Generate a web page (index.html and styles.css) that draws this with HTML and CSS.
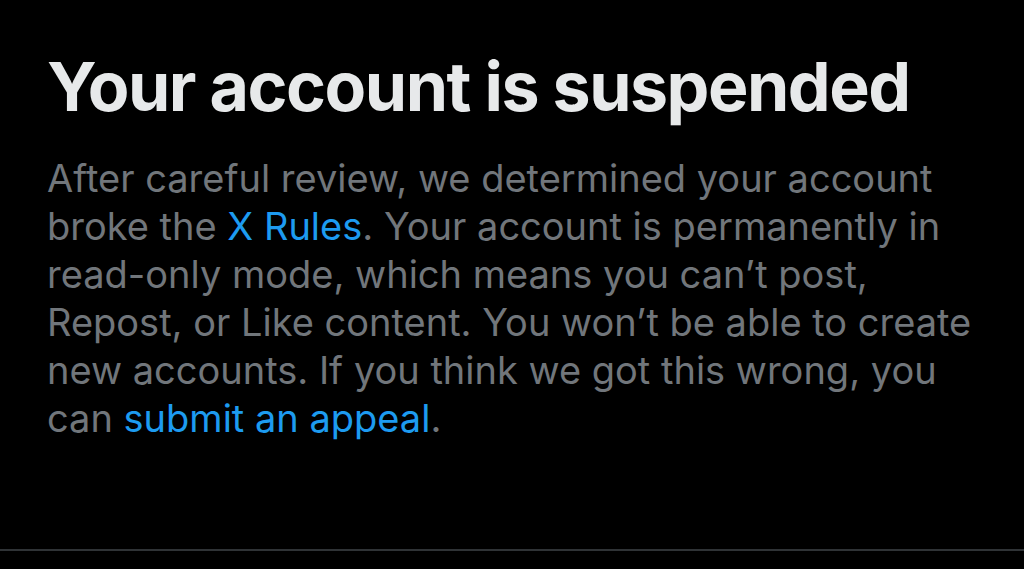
FILE: index.html
```html
<!DOCTYPE html>
<html lang="en">
<head>
<meta charset="utf-8">
<title>Your account is suspended</title>
<link rel="stylesheet" href="styles.css">
</head>
<body>
<main class="notice">
  <h1 class="notice-title">Your account is suspended</h1>
  <p class="notice-text">After careful review, we determined your account broke the <a class="link" href="#">X Rules</a>. Your account is permanently in read-only mode, which means you can’t post, Repost, or Like content. You won’t be able to create new accounts. If you think we got this wrong, you can <a class="link" href="#">submit an appeal</a>.</p>
</main>
<div class="divider"></div>
</body>
</html>
```
FILE: styles.css
```css
html, body {
  margin: 0;
  padding: 0;
  background: #000;
  height: 100%;
}
body {
  display: flex;
  flex-direction: column;
  font-family: Inter, "Noto Sans", sans-serif;
}
.notice {
  flex: 1;
  padding: 46px 20px 0 47px;
}
.notice-title {
  margin: 0;
  font-size: 68px;
  line-height: 80px;
  font-weight: 700;
  letter-spacing: -1.5px;
  color: #e7e9ea;
}
.notice-text {
  margin: 28px 0 0;
  width: 940px;
  font-size: 38px;
  line-height: 48px;
  font-weight: 400;
  color: #71767b;
}
.link {
  color: #1d9bf0;
  text-decoration: none;
}
.divider {
  height: 2px;
  background: #2f3336;
  margin-bottom: 18px;
}
```
